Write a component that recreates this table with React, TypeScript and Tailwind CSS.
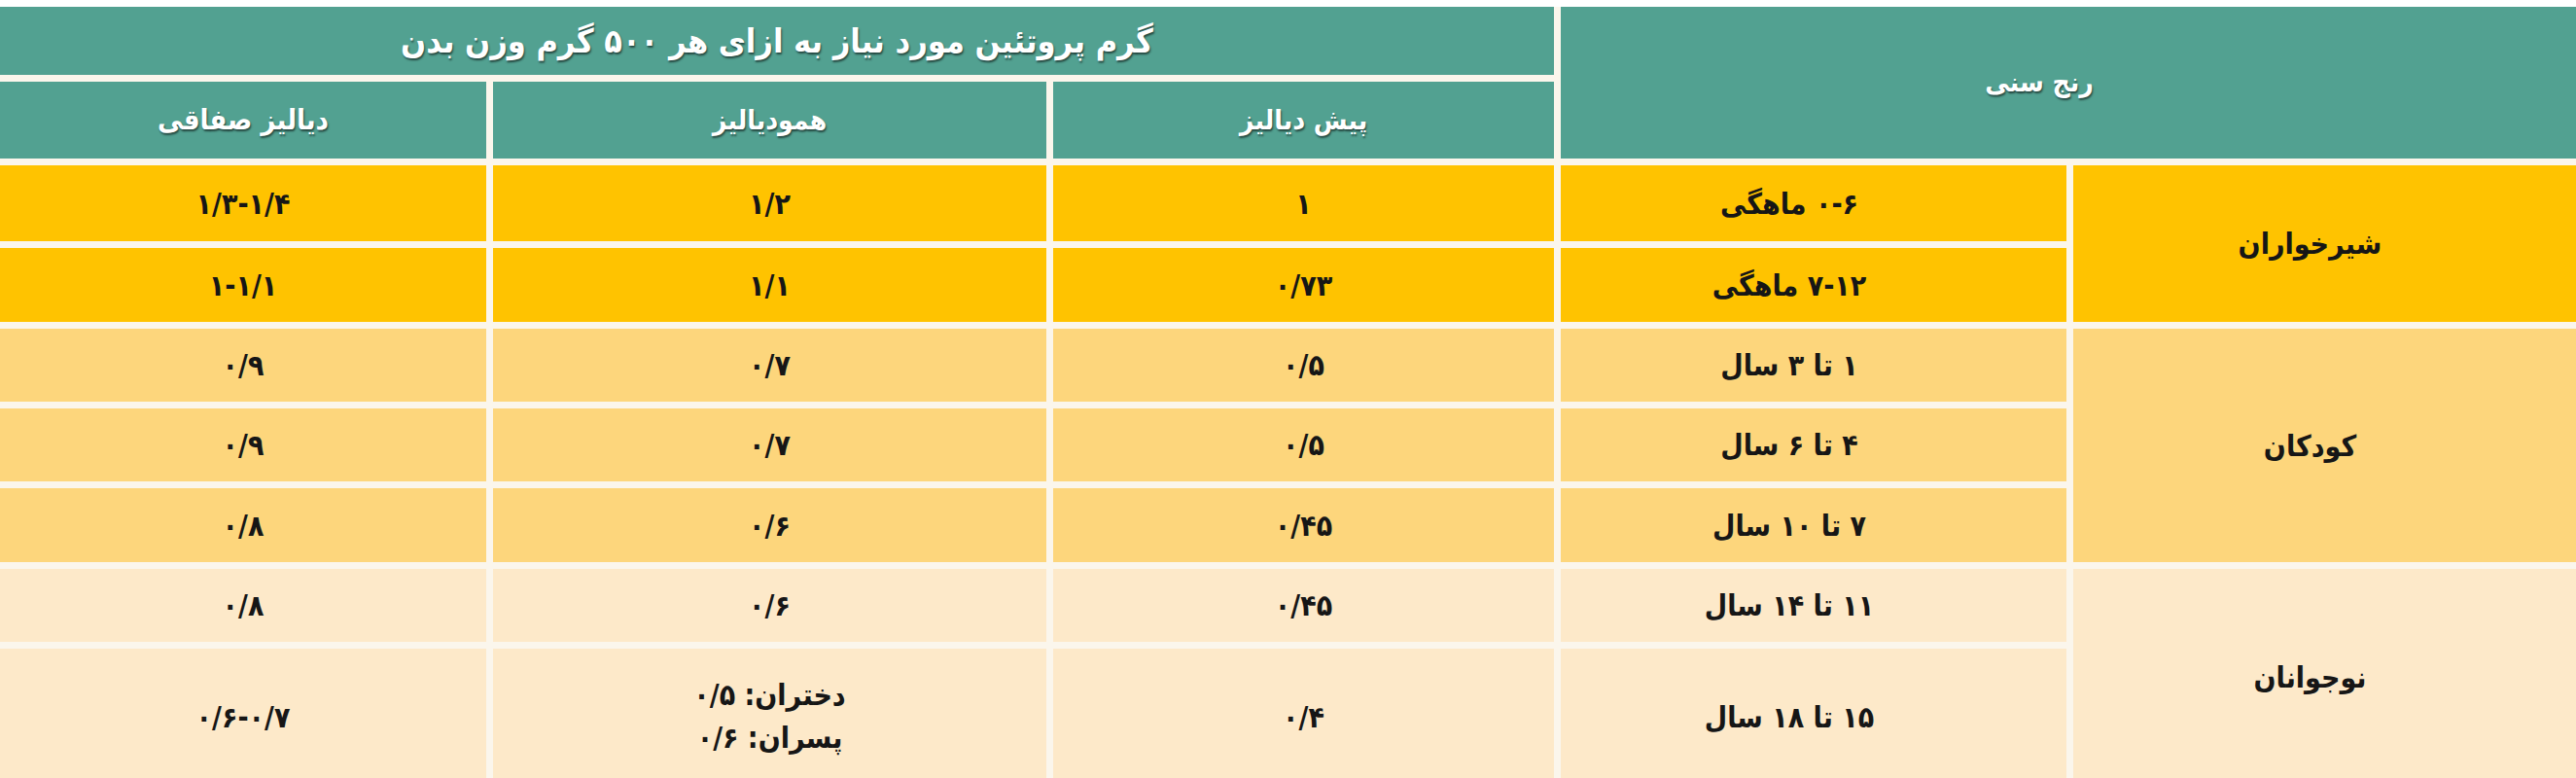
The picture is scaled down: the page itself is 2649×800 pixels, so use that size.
const font = "font-['DejaVu_Sans_Condensed','DejaVu_Sans',sans-serif]";

const head =
  "flex items-center justify-center bg-[#52a191] text-white font-bold [text-shadow:1px_2px_2px_rgba(0,0,0,0.55)]";

const cell = "flex items-center justify-center font-bold text-[30px] text-[#161616]";

const yellow = "bg-[#ffc300]";
const orange = "bg-[#fdd67c]";
const cream = "bg-[#fde9c9]";

type Row = { bg: string; age: string; pre: string; hemo: React.ReactNode; peri: string };

const rows: Row[] = [
  { bg: yellow, age: "۰-۶ ماهگی", pre: "۱", hemo: "۱/۲", peri: "۱/۳-۱/۴" },
  { bg: yellow, age: "۷-۱۲ ماهگی", pre: "۰/۷۳", hemo: "۱/۱", peri: "۱-۱/۱" },
  { bg: orange, age: "۱ تا ۳ سال", pre: "۰/۵", hemo: "۰/۷", peri: "۰/۹" },
  { bg: orange, age: "۴ تا ۶ سال", pre: "۰/۵", hemo: "۰/۷", peri: "۰/۹" },
  { bg: orange, age: "۷ تا ۱۰ سال", pre: "۰/۴۵", hemo: "۰/۶", peri: "۰/۸" },
  { bg: cream, age: "۱۱ تا ۱۴ سال", pre: "۰/۴۵", hemo: "۰/۶", peri: "۰/۸" },
  {
    bg: cream,
    age: "۱۵ تا ۱۸ سال",
    pre: "۰/۴",
    hemo: (
      <div className="flex flex-col items-center leading-[44px]">
        <span>دختران: ۰/۵</span>
        <span>پسران: ۰/۶</span>
      </div>
    ),
    peri: "۰/۶-۰/۷",
  },
];

const groups = [
  { label: "شیرخواران", bg: yellow, span: "row-[3/5]" },
  { label: "کودکان", bg: orange, span: "row-[5/8]" },
  { label: "نوجوانان", bg: cream, span: "row-[8/10]" },
];

const rowStarts = [
  "row-[3]",
  "row-[4]",
  "row-[5]",
  "row-[6]",
  "row-[7]",
  "row-[8]",
  "row-[9]",
];

export default function App() {
  return (
    <div className={`w-[2649px] h-[800px] overflow-hidden bg-white pt-[7px] ${font}`}>
      <div
        dir="rtl"
        className="grid grid-cols-[517px_520px_515px_569px_500px] grid-rows-[70px_79px_78px_76px_75px_75px_76px_75px_140px] gap-[7px] bg-[#fbf6ec]"
      >
        {/* header */}
        <div className={`${head} col-[1/3] row-[1/3] text-[28px] pr-[60px]`}>رنج سنی</div>
        <div className={`${head} col-[3/6] row-[1] text-[34px]`}>
          گرم پروتئین مورد نیاز به ازای هر ۵۰۰ گرم وزن بدن
        </div>
        <div className={`${head} col-[3] row-[2] text-[28px]`}>پیش دیالیز</div>
        <div className={`${head} col-[4] row-[2] text-[28px]`}>همودیالیز</div>
        <div className={`${head} col-[5] row-[2] text-[29px]`}>دیالیز صفاقی</div>

        {/* age groups */}
        {groups.map((g) => (
          <div key={g.label} className={`${cell} ${g.bg} ${g.span} col-[1] pr-[30px]`}>
            {g.label}
          </div>
        ))}

        {/* body rows */}
        {rows.map((r, i) => (
          <div key={r.age} className="contents">
            <div className={`${cell} ${r.bg} ${rowStarts[i]} col-[2] pr-[50px]`}>{r.age}</div>
            <div className={`${cell} ${r.bg} ${rowStarts[i]} col-[3]`}>{r.pre}</div>
            <div className={`${cell} ${r.bg} ${rowStarts[i]} col-[4]`}>{r.hemo}</div>
            <div className={`${cell} ${r.bg} ${rowStarts[i]} col-[5]`}>{r.peri}</div>
          </div>
        ))}
      </div>
    </div>
  );
}
